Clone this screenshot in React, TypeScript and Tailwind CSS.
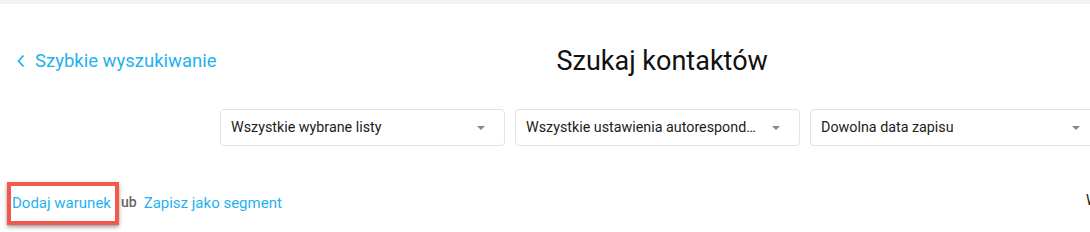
export default function App() {
  const selects = [
    { label: "Wszystkie wybrane listy", w: "w-[285px]" },
    { label: "Wszystkie ustawienia autoresponderów", w: "w-[285px]" },
    { label: "Dowolna data zapisu", w: "w-[290px]" },
  ];

  return (
    <div
      className="w-[1090px] h-[232px] overflow-hidden bg-white relative"
      style={{ fontFamily: "Roboto, 'Noto Sans', sans-serif" }}
    >
      {/* top strip */}
      <div className="h-1 bg-[#f1f2f4]" />

      {/* header */}
      <div className="flex items-center h-[80px] pt-[34px]">
        <a className="flex items-center pl-[16px] text-[#1fb2ef] text-[18.5px] leading-none cursor-pointer">
          <svg width="10" height="14" viewBox="0 0 10 14" className="mr-[9px]">
            <path d="M7.5 1.5 L2.5 7 L7.5 12.5" fill="none" stroke="#1fb2ef" strokeWidth="1.8" />
          </svg>
          Szybkie wyszukiwanie
        </a>
        <h1 className="ml-[340px] text-[27px] text-[#111] leading-none font-normal">
          Szukaj kontaktów
        </h1>
      </div>

      {/* filters */}
      <div className="flex gap-[10px] pl-[220px] mt-[25px] w-[1200px]">
        {selects.map((s) => (
          <div
            key={s.label}
            className={`${s.w} h-[37px] shrink-0 flex items-center border border-[#e2e2e2] rounded-[4px] pl-[10px] pr-[19px]`}
          >
            <span className="flex-1 min-w-0 text-[14.3px] text-[#1c1c1c] truncate">{s.label}</span>
            <svg width="8" height="4" viewBox="0 0 8 4" className="shrink-0 ml-[10px]">
              <path d="M0 0 L8 0 L4 4 Z" fill="#7d8b99" />
            </svg>
          </div>
        ))}
      </div>

      {/* actions */}
      <div className="flex items-center mt-[36px] h-[43px] text-[15px]">
        <div className="ml-[7px] h-[43px] w-[112px] border-[4px] border-[#f15a4b] bg-white flex items-center pl-[1px] shadow-[0_2px_4px_rgba(0,0,0,0.4)] z-10">
          <span className="text-[#1fb2ef] whitespace-nowrap">Dodaj warunek</span>
        </div>
        <span className="text-[#666] text-[14px] font-medium pl-[2px] -mt-[3px]">ub</span>
        <span className="text-[#1fb2ef] ml-[7px]">Zapisz jako segment</span>
      </div>

      <span className="absolute left-[1086px] top-[190px] text-[14px] text-[#111]">W</span>
    </div>
  );
}
